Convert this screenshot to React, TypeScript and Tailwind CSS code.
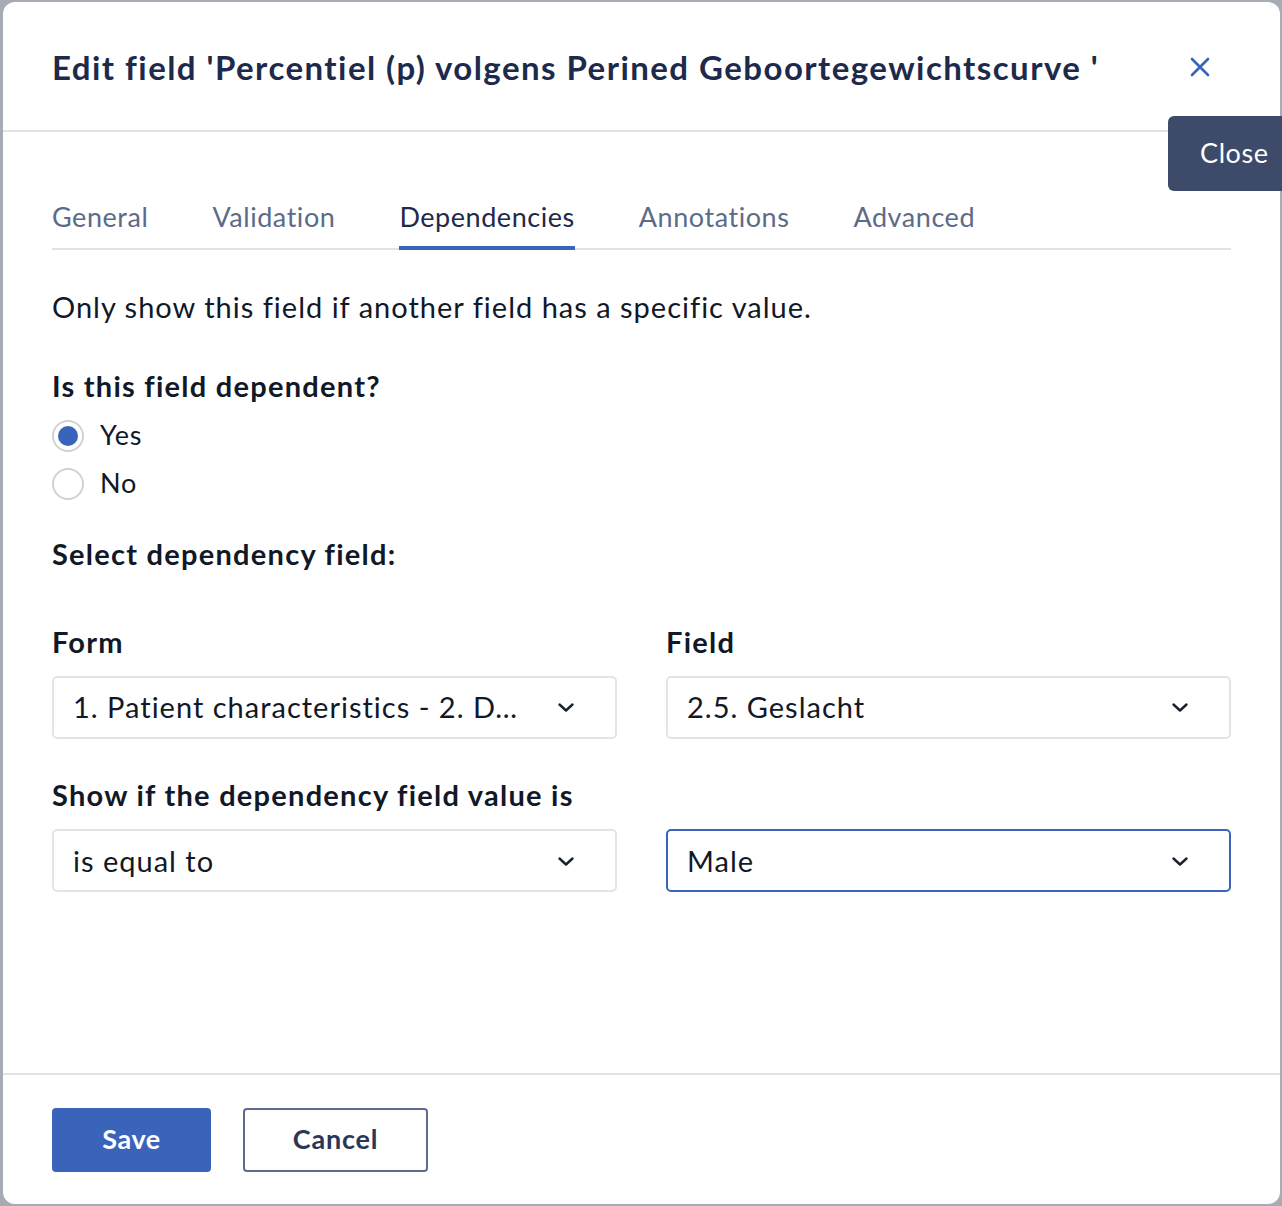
import React, { useState } from 'react';

const TABS = ['General', 'Validation', 'Dependencies', 'Annotations', 'Advanced'];

const Chevron = () => (
  <svg width="18" height="12" viewBox="0 0 18 12" fill="none" className="shrink-0">
    <path d="M2.5 3.5 L9 9.5 L15.5 3.5" stroke="#1a2033" strokeWidth="2.4" strokeLinecap="round" strokeLinejoin="round" />
  </svg>
);

const Select = ({ value, focused }: { value: string; focused?: boolean }) => (
  <div
    className={`flex h-[63px] items-center justify-between rounded-[5px] bg-white pl-[19px] pr-[40px] ${
      focused ? 'border-2 border-[#3a64b9]' : 'border-2 border-[#e2e4ea]'
    }`}
  >
    <span className="truncate text-[29px] tracking-[1px] text-[#111827]">{value}</span>
    <Chevron />
  </div>
);

const Radio = ({ checked, label }: { checked: boolean; label: string }) => (
  <label className="flex h-[48px] items-center gap-[16px]">
    <span className="flex h-[32px] w-[32px] items-center justify-center rounded-full border-2 border-[#cfd2d9] bg-white">
      {checked && <span className="h-[20px] w-[20px] rounded-full bg-[#3a64b9]" />}
    </span>
    <span className="text-[27px] tracking-[0.8px] text-[#111827]">{label}</span>
  </label>
);

export default function App() {
  const [tab] = useState('Dependencies');
  const heading = 'text-[29px] font-bold tracking-[1.25px] text-[#111827]';

  return (
    <div className="min-h-[1206px] w-[1282px] bg-[#a7abb6] pl-[3px] pt-[2px]" style={{ fontFamily: 'Lato, "Noto Sans", sans-serif' }}>
      <div className="relative flex h-[1202px] w-[1277px] flex-col rounded-[12px] bg-white">
        {/* Header */}
        <div className="flex h-[130px] items-center justify-between border-b-2 border-[#e1e2e8] pl-[49px] pr-[70px]">
          <h2 className="mt-[4px] text-[33px] font-bold tracking-[1.45px] text-[#1d2a4b]">
            Edit field 'Percentiel (p) volgens Perined Geboortegewichtscurve '
          </h2>
          <svg width="20" height="20" viewBox="0 0 20 20" className="mt-[2px]">
            <path d="M2 2 L18 18 M18 2 L2 18" stroke="#3a64b9" strokeWidth="2.6" strokeLinecap="round" />
          </svg>
        </div>

        {/* Tooltip */}
        <div className="absolute left-[1165px] top-[114px] flex h-[75px] w-[120px] items-center rounded-[6px] bg-[#3d4a69] pl-[32px] text-[27px] tracking-[0.6px] text-white">
          Close
        </div>

        {/* Body */}
        <div className="flex-1 px-[49px]">
          <div className="mt-[65px] flex gap-[64px] border-b-2 border-[#e1e2e8]">
            {TABS.map(t => (
              <div
                key={t}
                className={`text-[27px] tracking-[0.55px] ${
                  t === tab ? '-mb-[2px] border-b-4 border-[#3a64b9] pb-[8px] text-[#1d2a4b]' : 'pb-[10px] text-[#5c6b87]'
                }`}
              >
                {t}
              </div>
            ))}
          </div>

          <p className="mt-[35px] text-[29px] tracking-[1px] text-[#111827]">Only show this field if another field has a specific value.</p>

          <h3 className={`mt-[36px] ${heading}`}>Is this field dependent?</h3>
          <div className="mt-[4px] flex flex-col">
            <Radio checked label="Yes" />
            <Radio checked={false} label="No" />
          </div>

          <h3 className={`mt-[24px] ${heading}`}>Select dependency field:</h3>

          <div className="mt-[45px] grid grid-cols-2 gap-x-[49px]">
            <div>
              <div className={heading}>Form</div>
              <div className="mt-[12px]">
                <Select value="1. Patient characteristics - 2. D…" />
              </div>
            </div>
            <div>
              <div className={heading}>Field</div>
              <div className="mt-[12px]">
                <Select value="2.5. Geslacht" />
              </div>
            </div>
          </div>

          <div className={`mt-[34px] ${heading}`}>Show if the dependency field value is</div>
          <div className="mt-[13px] grid grid-cols-2 gap-x-[49px]">
            <Select value="is equal to" />
            <Select value="Male" focused />
          </div>
        </div>

        {/* Footer */}
        <div className="flex h-[131px] items-center gap-[32px] border-t-2 border-[#e1e2e8] pl-[49px]">
          <button className="h-[64px] w-[159px] rounded-[4px] bg-[#3a64b9] text-[27px] font-bold tracking-[0.6px] text-white">Save</button>
          <button className="h-[64px] w-[185px] rounded-[4px] border-2 border-[#5e6c8c] bg-white text-[27px] font-bold tracking-[0.8px] text-[#2b3756]">
            Cancel
          </button>
        </div>
      </div>
    </div>
  );
}
